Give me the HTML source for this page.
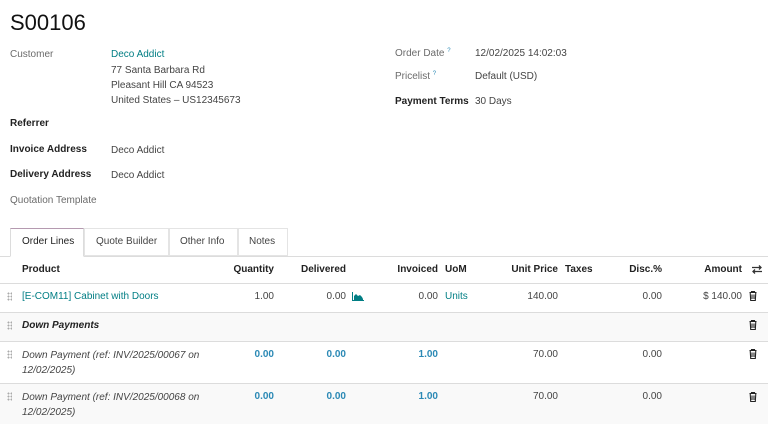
<!DOCTYPE html>
<html><head><meta charset="utf-8"><style>
*{margin:0;padding:0;box-sizing:border-box}
body{width:768px;height:424px;overflow:hidden;background:#fff;font-family:"Liberation Sans",sans-serif;font-size:10px;color:#444;position:relative}
.a{position:absolute;white-space:nowrap;line-height:14px}
.l{color:#6b6b6b}
.b{color:#222;font-weight:bold}
.t{color:#017e84}
.n{color:#2b89b5;font-weight:bold}
.r{text-align:right}
.i{font-style:italic}
.hr{position:absolute;left:0;width:768px;height:1px;background:#dcdcdc}
.bg{position:absolute;left:0;width:768px;background:#f9f9f9}
.h{font-weight:bold;color:#222}
.q{font-size:6px;color:#2b89b5;position:relative;top:-4px}
.g{position:absolute;width:5px;height:9px;background-image:radial-gradient(circle,#aaa 0.9px,transparent 1.1px);background-size:3px 3px}
</style></head><body>
<div class="a" style="left:10px;top:10px;font-size:22px;line-height:26px;color:#111">S00106</div>

<div class="a l" style="left:10px;top:48px">Customer</div>
<div class="a t" style="left:111px;top:48px">Deco Addict</div>
<div class="a" style="left:111px;top:64px">77 Santa Barbara Rd</div>
<div class="a" style="left:111px;top:79px">Pleasant Hill CA 94523</div>
<div class="a" style="left:111px;top:94px">United States – US12345673</div>
<div class="a b" style="left:10px;top:117px">Referrer</div>
<div class="a b" style="left:10px;top:143px">Invoice Address</div>
<div class="a" style="left:111px;top:144px">Deco Addict</div>
<div class="a b" style="left:10px;top:168px">Delivery Address</div>
<div class="a" style="left:111px;top:169px">Deco Addict</div>
<div class="a l" style="left:10px;top:194px">Quotation Template</div>

<div class="a l" style="left:395px;top:47px">Order Date <span class="q">?</span></div>
<div class="a" style="left:475px;top:47px">12/02/2025 14:02:03</div>
<div class="a l" style="left:395px;top:70px">Pricelist <span class="q">?</span></div>
<div class="a" style="left:475px;top:70px">Default (USD)</div>
<div class="a b" style="left:395px;top:95px">Payment Terms</div>
<div class="a" style="left:475px;top:95px">30 Days</div>

<!-- tabs -->
<div style="position:absolute;left:10px;top:228px;width:74px;height:29px;border:1px solid #dcdcdc;border-bottom:1px solid #fff;border-top-color:#b59ab0;background:#fff;z-index:2"></div>
<div style="position:absolute;left:84px;top:228px;width:85px;height:28px;border:1px solid #e4e4e4"></div>
<div style="position:absolute;left:169px;top:228px;width:69px;height:28px;border:1px solid #e4e4e4"></div>
<div style="position:absolute;left:238px;top:228px;width:50px;height:28px;border:1px solid #e4e4e4"></div>
<div class="a" style="left:22px;top:235px;color:#222;z-index:3">Order Lines</div>
<div class="a" style="left:96px;top:235px">Quote Builder</div>
<div class="a" style="left:180px;top:235px">Other Info</div>
<div class="a" style="left:249px;top:235px">Notes</div>
<div class="hr" style="top:256px"></div>

<!-- header -->
<div class="a h" style="left:22px;top:263px">Product</div>
<div class="a h r" style="left:200px;width:74px;top:263px">Quantity</div>
<div class="a h r" style="left:280px;width:66px;top:263px">Delivered</div>
<div class="a h r" style="left:380px;width:58px;top:263px">Invoiced</div>
<div class="a h" style="left:445px;top:263px">UoM</div>
<div class="a h r" style="left:490px;width:68px;top:263px">Unit Price</div>
<div class="a h" style="left:565px;top:263px">Taxes</div>
<div class="a h r" style="left:600px;width:62px;top:263px">Disc.%</div>
<div class="a h r" style="left:680px;width:62px;top:263px">Amount</div>
<svg style="position:absolute;left:751px;top:264px" width="12" height="11" viewBox="0 0 12 11"><path d="M1 3.5H10M8 1.5L10 3.5L8 5.5M11 7.5H2M4 5.5L2 7.5L4 9.5" stroke="#333" stroke-width="1.3" fill="none"/></svg>
<div class="hr" style="top:283px"></div>

<!-- row1 -->
<div class="g" style="left:7px;top:292px"></div>
<div class="a t" style="left:22px;top:290px">[E-COM11] Cabinet with Doors</div>
<div class="a r" style="left:200px;width:74px;top:290px">1.00</div>
<div class="a r" style="left:280px;width:66px;top:290px">0.00</div>
<svg style="position:absolute;left:352px;top:292px" width="12" height="9" viewBox="0 0 12 9"><path d="M0 0V9H12V8H1V0Z M2 8V4L4 2L6 4L8 3L10 5L11 7V8Z" fill="#017e84"/></svg>
<div class="a r" style="left:380px;width:58px;top:290px">0.00</div>
<div class="a t" style="left:445px;top:290px">Units</div>
<div class="a r" style="left:490px;width:68px;top:290px">140.00</div>
<div class="a r" style="left:600px;width:62px;top:290px">0.00</div>
<div class="a r" style="left:680px;width:62px;top:290px">$ 140.00</div>
<svg style="position:absolute;left:749px;top:291px" width="8" height="10" viewBox="0 0 8 10"><path d="M0.5 1.5H7.5M2.5 1.5V0.5H5.5V1.5M1.2 1.5L1.7 9.5H6.3L6.8 1.5M3 3.5V8M5 3.5V8" stroke="#222" stroke-width="1.1" fill="none"/></svg>
<div class="hr" style="top:312px"></div>

<!-- row2 -->
<div class="bg" style="top:313px;height:28px"></div>
<div class="g" style="left:7px;top:321px"></div>
<div class="a i h" style="left:22px;top:319px">Down Payments</div>
<svg style="position:absolute;left:749px;top:320px" width="8" height="10" viewBox="0 0 8 10"><path d="M0.5 1.5H7.5M2.5 1.5V0.5H5.5V1.5M1.2 1.5L1.7 9.5H6.3L6.8 1.5M3 3.5V8M5 3.5V8" stroke="#222" stroke-width="1.1" fill="none"/></svg>
<div class="hr" style="top:341px"></div>

<!-- row3 -->
<div class="g" style="left:7px;top:350px"></div>
<div class="a i" style="left:22px;top:348px;line-height:15px">Down Payment (ref: INV/2025/00067 on<br>12/02/2025)</div>
<div class="a r n" style="left:200px;width:74px;top:348px">0.00</div>
<div class="a r n" style="left:280px;width:66px;top:348px">0.00</div>
<div class="a r n" style="left:380px;width:58px;top:348px">1.00</div>
<div class="a r" style="left:490px;width:68px;top:348px">70.00</div>
<div class="a r" style="left:600px;width:62px;top:348px">0.00</div>
<svg style="position:absolute;left:749px;top:349px" width="8" height="10" viewBox="0 0 8 10"><path d="M0.5 1.5H7.5M2.5 1.5V0.5H5.5V1.5M1.2 1.5L1.7 9.5H6.3L6.8 1.5M3 3.5V8M5 3.5V8" stroke="#222" stroke-width="1.1" fill="none"/></svg>
<div class="hr" style="top:383px"></div>

<!-- row4 -->
<div class="bg" style="top:384px;height:40px"></div>
<div class="g" style="left:7px;top:392px"></div>
<div class="a i" style="left:22px;top:390px;line-height:15px">Down Payment (ref: INV/2025/00068 on<br>12/02/2025)</div>
<div class="a r n" style="left:200px;width:74px;top:390px">0.00</div>
<div class="a r n" style="left:280px;width:66px;top:390px">0.00</div>
<div class="a r n" style="left:380px;width:58px;top:390px">1.00</div>
<div class="a r" style="left:490px;width:68px;top:390px">70.00</div>
<div class="a r" style="left:600px;width:62px;top:390px">0.00</div>
<svg style="position:absolute;left:749px;top:392px" width="8" height="10" viewBox="0 0 8 10"><path d="M0.5 1.5H7.5M2.5 1.5V0.5H5.5V1.5M1.2 1.5L1.7 9.5H6.3L6.8 1.5M3 3.5V8M5 3.5V8" stroke="#222" stroke-width="1.1" fill="none"/></svg>
</body></html>
